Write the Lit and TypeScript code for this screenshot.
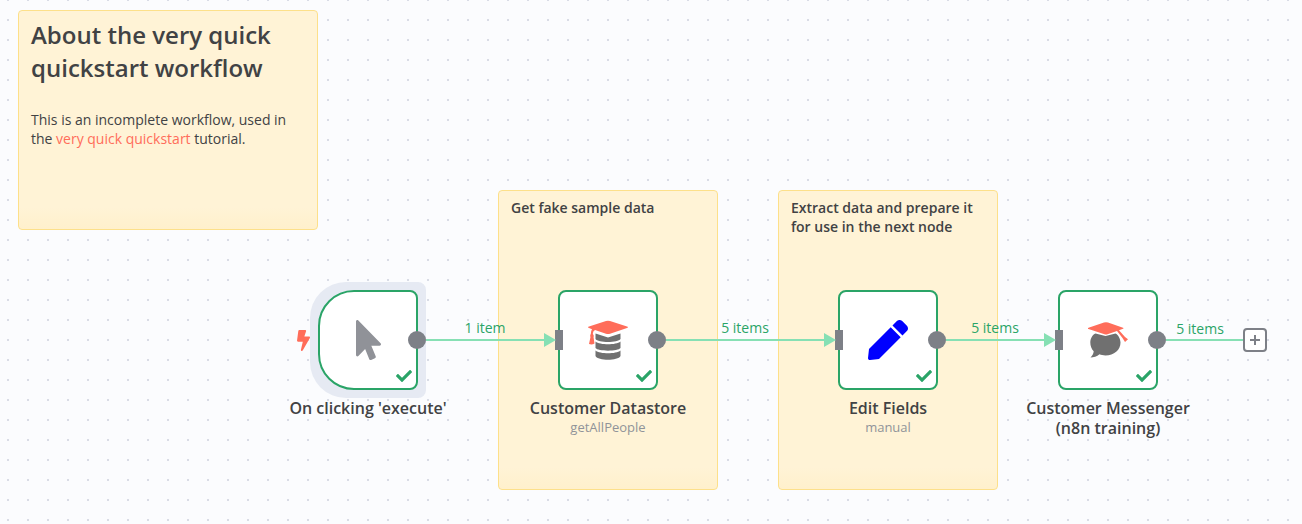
import { LitElement, html, css, nothing } from "lit";
import { customElement, property } from "lit/decorators.js";
import { styleMap } from "lit/directives/style-map.js";

const icons: Record<string, unknown> = {
  pointer: html`<svg viewBox="0 0 320 512" width="25" height="40" fill="#909298"><path d="M302.189 329.126H196.105l55.831 135.993c3.889 9.428-.555 19.999-9.444 23.999l-49.165 21.427c-9.165 4-19.443-.571-23.332-9.714l-53.053-129.136-86.664 89.138C18.729 472.71 0 463.554 0 447.977V18.299C0 1.899 19.921-6.096 30.277 5.443l284.412 292.542c11.472 11.179 3.007 31.141-12.5 31.141z"/></svg>`,
  datastore: html`<svg viewBox="0 0 40 40" width="40" height="40">
    <g fill="#707070">
      <path d="M7.500 13.500 L20 17.500 L32.500 13.500 V19 C30 23 10 23 7.500 19Z"/>
      <path d="M7.500 21.500 C12 25.200 28 25.200 32.500 21.500 V28 C30 31.500 10 31.500 7.500 28Z"/>
      <path d="M7.500 30.500 C12 34.200 28 34.200 32.500 30.500 V36 C30 41 10 41 7.500 36Z"/>
    </g>
    <path fill="#ff6d5a" stroke="#fff" stroke-width="1" paint-order="stroke" d="M1 6.500 L18 1 Q20 .3 22 1 L39 6.500 Q40.800 7.200 39 8 L22 13.700 Q20 14.300 18 13.700 L7 10 Q4.800 11 4.800 14 Q6.300 15.500 5.500 17 L6.500 23.500 Q4 25 1 24 L2.500 17 Q1.800 15.300 2.800 14 Q2.800 11 4 9.300 L1 8 Q-.8 7.200 1 6.500Z"/>
  </svg>`,
  pen: html`<svg viewBox="0 0 512 512" width="40" height="40" fill="#0000ff"><path d="M290.74 93.24l128.02 128.02-277.99 277.99-114.14 12.6C11.35 513.54-1.56 500.62.14 485.34l12.7-114.22 277.9-277.88zm207.2-19.06l-60.11-60.11c-18.75-18.75-49.16-18.75-67.91 0l-56.55 56.55 128.02 128.02 56.55-56.55c18.75-18.76 18.75-49.16 0-67.91z"/></svg>`,
  messenger: html`<svg viewBox="0 0 40 40" width="40" height="40">
    <path fill="#707070" d="M7.500 13.500 L17.500 16 L27.500 13.500 C30 14 32.500 19 32.500 22.500 C32.500 30 26 35.500 17.500 35.500 C15 35.500 13 35 11.500 34.300 C9 36.500 5.500 37.500 2.500 37.500 C4.500 35.500 5.500 33.500 5.700 31.200 C3.500 29 2.300 26 2.300 22.500 C2.300 18.500 4.500 14.500 7.500 13.500Z"/>
    <path fill="#ff6d5a" d="M.5 7.700 L16 2.400 Q18 1.900 20 2.400 L35 7.700 Q36 8.200 35 8.700 L31 10.300 L37 17 L40 19.300 L37 22 L34.500 18 L29 11 L19.500 14.300 Q18 14.700 16.500 14.300 L.5 9 Q-.8 8.300 .5 7.700Z"/>
  </svg>`,
};

interface FlowNode {
  x: number; y: number; name: string; icon: string; sub?: string; trigger?: boolean;
}
interface Note {
  x: number; y: number; w: number; h: number; title: string; large?: boolean;
}
interface Link { x1: number; x2: number; y: number; label: string; plus?: boolean; }

@customElement("flow-node")
export class FlowNodeElement extends LitElement {
  @property({ attribute: false }) node!: FlowNode;

  static styles = css`
    :host { display: block; width: 100px; }
    .card {
      position: relative; box-sizing: border-box; height: 100px; display: grid; place-items: center;
      background: #fff; border: 2px solid #2aa467; border-radius: 8px;
    }
    .card.trigger { border-radius: 36px 8px 8px 36px; }
    .halo {
      position: absolute; left: -8px; top: -8px; width: 116px; height: 116px;
      background: #e6eaf3; border-radius: 36px 8px 8px 36px;
    }
    svg { display: block; }
    .bolt { position: absolute; left: -23px; top: 38px; }
    .check { position: absolute; right: 4px; bottom: 4px; }
    .out { position: absolute; right: -10px; top: 39px; width: 18px; height: 18px; border-radius: 50%; background: #7d8087; }
    .in { position: absolute; left: -5px; top: 38px; width: 8px; height: 20px; background: #7d8087; }
    .caption { display: flex; flex-direction: column; align-items: center; margin: 8px -50px 0; text-align: center; }
    .name { font-size: 16px; line-height: 20px; font-weight: 600; color: #414244; max-width: 180px; }
    .sub { font-size: 13px; line-height: 18px; color: #909399; }
  `;

  render() {
    const n = this.node;
    return html`
      ${n.trigger ? html`<div class="halo"></div>` : nothing}
      <div class="card ${n.trigger ? "trigger" : ""}">
        ${icons[n.icon]}
        ${n.trigger
          ? html`<svg class="bolt" viewBox="0 0 320 512" width="13" height="21" fill="#ff6d5a"><path d="M296 160H180.600l42.600-129.800C227.200 15 215.700 0 200 0H56C44 0 33.800 8.900 32.200 20.800l-32 240C-1.700 275.200 9.500 288 24 288h118.700L96.600 482.500c-3.600 15.200 8 29.500 23.300 29.500 8.400 0 16.400-4.400 20.800-12l176-304c9.300-15.900-2.200-36-20.700-36z"/></svg>`
          : html`<div class="in"></div>`}
        <div class="out"></div>
        <svg class="check" viewBox="0 0 512 512" width="16" height="16" fill="#2aa467"><path d="M173.898 439.404l-166.400-166.400c-9.997-9.997-9.997-26.206 0-36.204l36.203-36.204c9.997-9.998 26.207-9.998 36.204 0L192 312.690 432.095 72.596c9.997-9.997 26.207-9.997 36.204 0l36.203 36.204c9.997 9.997 9.997 26.206 0 36.204l-294.400 294.401c-9.998 9.997-26.207 9.997-36.204-.001z"/></svg>
      </div>
      <div class="caption">
        <div class="name">${n.name}</div>
        ${n.sub ? html`<div class="sub">${n.sub}</div>` : nothing}
      </div>`;
  }
}

@customElement("app-root")
export class AppRoot extends LitElement {
  static styles = css`
    :host {
      display: block; position: relative; min-height: 100vh; overflow: hidden;
      font-family: "Open Sans", "Noto Sans", sans-serif; color: #414244;
      background: #fbfcfe conic-gradient(from 90deg at 18px 18px, #d9dce6 25%, transparent 0) 9px 1px / 20px 20px;
    }
    .note {
      position: absolute; box-sizing: border-box; padding: 7px 12px; border: 1px solid #fde08a; border-radius: 4px;
      background: linear-gradient(to top, #fff0cc 0, #fff3d6 22px);
    }
    h1 { margin: 0 0 26px; font-size: 24px; line-height: 33px; font-weight: 600; }
    p, h2 { margin: 0; font-size: 14px; line-height: 19px; font-weight: 400; }
    h2 { font-weight: 600; }
    a { color: #ff6d5a; text-decoration: none; }
    .at { position: absolute; }
    .link { position: absolute; display: flex; align-items: center; height: 24px; }
    .line { position: relative; flex: 1; height: 2px; background: #86e0b4; }
    .arrow { width: 12px; height: 14px; fill: #86e0b4; }
    .label {
      position: absolute; left: 0; right: 0; bottom: 3px; text-align: center;
      font-size: 14px; line-height: 20px; color: #2aa467;
    }
    .open .label { right: 9px; bottom: 2px; }
    .add {
      box-sizing: border-box; width: 24px; height: 24px; padding: 0; display: grid; place-items: center;
      background: #fff; border: 2px solid #7d8087; border-radius: 4px;
    }
  `;

  notes: Note[] = [
    { x: 18, y: 10, w: 300, h: 220, title: "About the very quick quickstart workflow", large: true },
    { x: 498, y: 190, w: 220, h: 300, title: "Get fake sample data" },
    { x: 778, y: 190, w: 220, h: 300, title: "Extract data and prepare it for use in the next node" },
  ];
  nodes: FlowNode[] = [
    { x: 318, y: 290, name: "On clicking 'execute'", icon: "pointer", trigger: true },
    { x: 558, y: 290, name: "Customer Datastore", icon: "datastore", sub: "getAllPeople" },
    { x: 838, y: 290, name: "Edit Fields", icon: "pen", sub: "manual" },
    { x: 1058, y: 290, name: "Customer Messenger (n8n training)", icon: "messenger" },
  ];
  links: Link[] = [
    { x1: 417, x2: 556, y: 340, label: "1 item" },
    { x1: 657, x2: 836, y: 340, label: "5 items" },
    { x1: 937, x2: 1056, y: 340, label: "5 items" },
    { x1: 1157, x2: 1267, y: 340, label: "5 items", plus: true },
  ];

  render() {
    return html`
      ${this.notes.map((n) => html`
        <section class="note" style=${styleMap({ left: n.x + "px", top: n.y + "px", width: n.w + "px", height: n.h + "px" })}>
          ${n.large
            ? html`<h1>${n.title}</h1>
                <p>This is an incomplete workflow, used in the <a href="#quickstart">very quick quickstart</a> tutorial.</p>`
            : html`<h2>${n.title}</h2>`}
        </section>`)}
      ${this.nodes.map((n) => html`
        <flow-node class="at" .node=${n} style=${styleMap({ left: n.x + "px", top: n.y + "px" })}></flow-node>`)}
      ${this.links.map((l) => html`
        <div class="link ${l.plus ? "open" : ""}" style=${styleMap({ left: l.x1 + 9 + "px", top: l.y - 12 + "px", width: l.x2 - l.x1 - 9 + "px" })}>
          <div class="line"><span class="label">${l.label}</span></div>
          ${l.plus
            ? html`<button class="add" aria-label="Add node"><svg viewBox="0 0 10 10" width="10" height="10"><path d="M5 0V10M0 5H10" stroke="#7d8087" stroke-width="2"/></svg></button>`
            : html`<svg class="arrow" viewBox="0 0 12 14"><path d="M0 0L12 7L0 14Z"/></svg>`}
        </div>`)}
    `;
  }
}
